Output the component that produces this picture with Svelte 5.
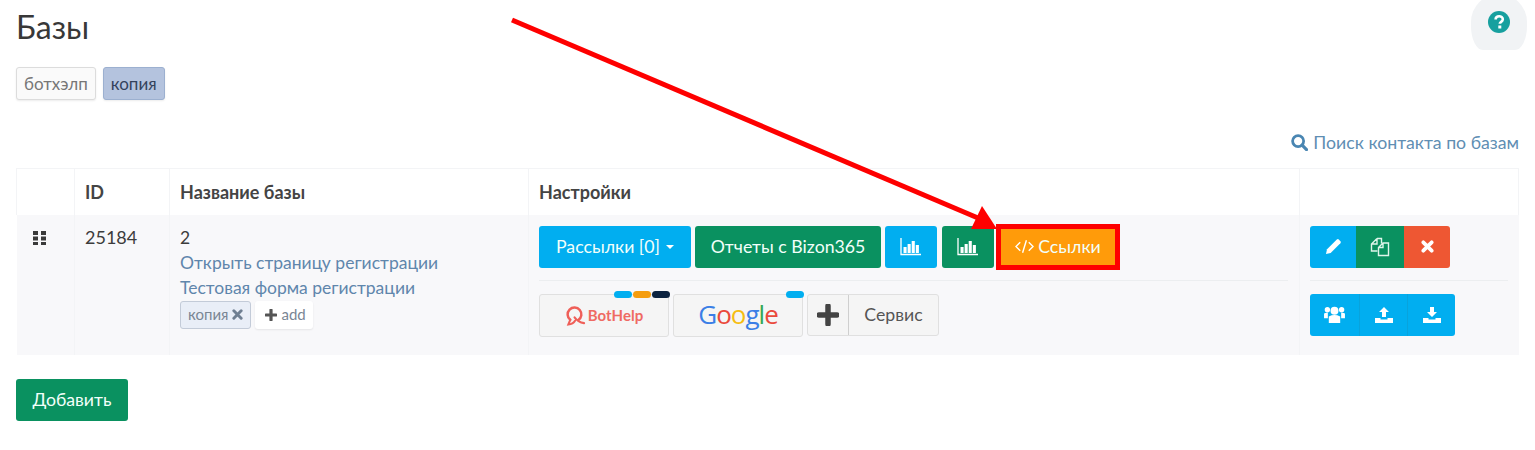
<script>
  const statDots = ['cyan', 'orange', 'navy'];
</script>

<main>
  <h1>Базы</h1>

  <div class="tags">
    <span class="tag">ботхэлп</span>
    <span class="tag active">копия</span>
  </div>

  <div class="search-row">
    <a class="search" href="#search">
      <svg viewBox="0 0 16 16" width="17" height="17" aria-hidden="true">
        <circle cx="6.7" cy="6.7" r="5.2" fill="none" stroke="currentColor" stroke-width="2.6" />
        <path d="M10.5 10.5 14.6 14.6" stroke="currentColor" stroke-width="3" stroke-linecap="round" />
      </svg>
      Поиск контакта по базам
    </a>
  </div>

  <table>
    <thead>
      <tr>
        <th class="c-drag"></th>
        <th class="c-id">ID</th>
        <th class="c-name">Название базы</th>
        <th class="c-settings">Настройки</th>
        <th class="c-actions"></th>
      </tr>
    </thead>
    <tbody>
      <tr>
        <td class="drag">
          <svg viewBox="0 0 14 14" width="14" height="14" aria-hidden="true">
            <path d="M0 0h5v4H0zM8 0h5v4H8zM0 5.5h5v4H0zM8 5.5h5v4H8zM0 11h5v3H0zM8 11h5v3H8z" fill="#3a3a3a" />
          </svg>
        </td>
        <td class="id">25184</td>
        <td class="name">
          <div>2</div>
          <a href="#open">Открыть страницу регистрации</a>
          <a href="#form">Тестовая форма регистрации</a>
          <div class="labels">
            <span class="label">копия
              <svg viewBox="0 0 12 12" width="11" height="11" aria-hidden="true"><path d="M2 2 10 10M10 2 2 10" stroke="currentColor" stroke-width="3.2" stroke-linecap="round" /></svg>
            </span>
            <span class="add">
              <svg viewBox="0 0 12 12" width="12" height="12" aria-hidden="true"><path d="M6 1v10M1 6h10" stroke="currentColor" stroke-width="3.2" stroke-linecap="round" /></svg>
              add
            </span>
          </div>
        </td>
        <td class="settings">
          <div class="line first">
            <button class="btn cyan w-mail">Рассылки [0] <i class="caret"></i></button>
            <button class="btn green w-report">Отчеты с Bizon365</button>
            <button class="btn cyan square">
              <svg viewBox="0 0 22 18" width="22" height="18" aria-hidden="true"><path d="M1 0v16.500h20" fill="none" stroke="#fff" stroke-width="1.300" /><path d="M3.500 9h3.100v6H3.500zM7.600 6h3.100v9H7.600zM11.700 3h3.100v12h-3.100zM15.800 7h3.100v8h-3.100z" fill="#fff" /></svg>
            </button>
            <button class="btn green square">
              <svg viewBox="0 0 22 18" width="22" height="18" aria-hidden="true"><path d="M1 0v16.500h20" fill="none" stroke="#fff" stroke-width="1.300" /><path d="M3.500 9h3.100v6H3.500zM7.600 6h3.100v9H7.600zM11.700 3h3.100v12h-3.100zM15.800 7h3.100v8h-3.100z" fill="#fff" /></svg>
            </button>
            <span class="highlight">
              <button class="btn orange">
                <svg viewBox="0 0 20 14" width="19" height="15" aria-hidden="true"><path d="M5.500 2.500 1 7l4.500 4.500M14.500 2.500 19 7l-4.500 4.500M12 .5 8 13.500" fill="none" stroke="#fff" stroke-width="1.500" /></svg>
                Ссылки
              </button>
            </span>
          </div>
          <div class="line second">
            <div class="service">
              <span class="dots">
                {#each statDots as d}
                  <i class={d}></i>
                {/each}
              </span>
              <svg class="bh-mark" viewBox="0 0 22 22" width="21" height="21" aria-hidden="true">
                <path d="M5.500 15.500A7.200 7.200 0 1 1 14 15.800" fill="none" stroke="#ef5f58" stroke-width="2.600" stroke-linecap="round" />
                <path d="M5.500 15.500 3.500 20.500q5-.5 7-4M10 13q3.500 5 10 6" fill="none" stroke="#ef5f58" stroke-width="2.200" stroke-linecap="round" />
              </svg>
              <span class="bh-text">BotHelp</span>
            </div>
            <div class="service">
              <span class="dots"><i class="cyan"></i></span>
              <span class="google"><b class="g-b">G</b><b class="g-r">o</b><b class="g-y">o</b><b class="g-b">g</b><b class="g-g">l</b><b class="g-r">e</b></span>
            </div>
            <div class="add-service">
              <span class="plus">
                <svg viewBox="0 0 22 22" width="22" height="22" aria-hidden="true"><path d="M11 2v18M2 11h18" stroke="#444" stroke-width="5.500" stroke-linecap="round" /></svg>
              </span>
              <span class="add-text">Сервис</span>
            </div>
          </div>
        </td>
        <td class="actions">
          <div class="line first">
            <div class="group">
              <button class="seg cyan s46">
                <svg viewBox="0 0 18 18" width="17" height="17" aria-hidden="true"><path d="M1 17l1.200-5L12.500 1.700a1.500 1.500 0 0 1 2.100 0l1.700 1.700a1.500 1.500 0 0 1 0 2.100L6 15.800z" fill="#fff" /></svg>
              </button>
              <button class="seg green s48">
                <svg viewBox="0 0 20 20" width="20" height="20" aria-hidden="true"><path d="M7 1.500h4.500v5M7 1.500 1.500 7v7h6M7 1.500V7H1.500" fill="none" stroke="#dff5ea" stroke-width="1.400" /><path d="M13 6h5.500v12.500H8.500V10.500zM13 6v4.500H8.500" fill="none" stroke="#dff5ea" stroke-width="1.400" /></svg>
              </button>
              <button class="seg red s46">
                <svg viewBox="0 0 14 14" width="13" height="13" aria-hidden="true"><path d="M2.500 2.500 11.500 11.500M11.500 2.500 2.500 11.500" stroke="#fff" stroke-width="4" stroke-linecap="round" /></svg>
              </button>
            </div>
          </div>
          <div class="line second">
            <div class="group">
              <button class="seg cyan s49">
                <svg viewBox="0 0 22 20" width="21" height="19" aria-hidden="true"><circle cx="11" cy="6" r="4.200" fill="#fff" /><circle cx="3.500" cy="5" r="2.800" fill="#fff" /><circle cx="18.500" cy="5" r="2.800" fill="#fff" /><path d="M5 12q6-3 12 0v7H5zM0 9q1.500-1.200 4-.8V14H0zM22 9q-1.500-1.200-4-.8V14h4z" fill="#fff" /></svg>
              </button>
              <button class="seg cyan s48 ruled">
                <svg viewBox="0 0 18 18" width="18" height="18" aria-hidden="true"><path d="M9 1l5 5h-3v5H7V6H4zM0 12h5.500v1.500h7V12H18v5H0z" fill="#fff" /></svg>
              </button>
              <button class="seg cyan s48 ruled">
                <svg viewBox="0 0 18 18" width="18" height="18" aria-hidden="true"><path d="M7 1h4v5h3l-5 5-5-5h3zM0 12h5.500v1.500h7V12H18v5H0z" fill="#fff" /></svg>
              </button>
            </div>
          </div>
        </td>
      </tr>
    </tbody>
  </table>

  <button class="btn green create">Добавить</button>

  <!-- overlays: help bubble and the annotation arrow -->
  <div class="help">
    <svg viewBox="0 0 22 22" width="22" height="22" aria-hidden="true">
      <circle cx="11" cy="11" r="11" fill="#17a09f" />
      <path d="M7.600 8.500c0-4.400 7.200-4.300 7.200-.200 0 2.500-3 2.500-3 4.400" fill="none" stroke="#fff" stroke-width="2.600" />
      <rect x="10.300" y="14.500" width="3" height="3" fill="#fff" />
    </svg>
  </div>

  <svg class="arrow" viewBox="0 0 1535 450" width="1535" height="450" aria-hidden="true">
    <path d="M512 20 978 218" stroke="#fe0000" stroke-width="5" />
    <path d="M997 229 971 229 982 206z" fill="#fe0000" />
  </svg>
</main>

<style>
  :global(body) {
    margin: 0;
    background: #fff;
    font-family: Lato, "Noto Sans", sans-serif;
    color: #333;
  }
  main {
    position: relative;
    box-sizing: border-box;
    width: 1535px;
    height: 450px;
    overflow: hidden;
    padding: 9px 16px 0;
  }
  h1 {
    margin: 0;
    font-size: 32px;
    line-height: 36px;
    font-weight: 400;
    color: #383838;
  }
  .tags {
    display: flex;
    gap: 7px;
    margin-top: 22px;
  }
  .tag {
    box-sizing: border-box;
    height: 33px;
    padding: 0 7px;
    display: flex;
    align-items: center;
    font-size: 17px;
    color: #777;
    background: #fafafa;
    border: 1px solid #dcdcdc;
    border-radius: 3px;
    box-shadow: 0 1px 2px rgba(0, 0, 0, 0.08);
  }
  .tag.active {
    color: #33425c;
    background: #b4c3de;
    border-color: #9cb0d0;
  }
  .search-row {
    display: flex;
    justify-content: flex-end;
    margin-top: 31px;
    height: 22px;
  }
  .search {
    display: flex;
    align-items: center;
    gap: 5px;
    font-size: 17.700px;
    color: #5f8eb3;
    text-decoration: none;
  }
  .search svg {
    color: #4a86b2;
  }
  table {
    width: 1503px;
    margin-top: 15px;
    border-collapse: collapse;
    table-layout: fixed;
  }
  th, td {
    box-sizing: border-box;
  }
  th {
    height: 46px;
    padding: 0 11px 0 10px;
    text-align: left;
    font-size: 18px;
    font-weight: 700;
    color: #444;
    border: 1px solid #f3f4f6;
    border-bottom: 0;
  }
  td {
    height: 140px;
    padding: 11px 11px 11px 10px;
    vertical-align: top;
    background: #f8f8fa;
    border-right: 1px solid #f3f4f6;
    font-size: 17.500px;
    color: #3c3c3c;
  }
  td:last-child {
    border-right: 0;
  }
  .c-drag { width: 58px; }
  .c-id { width: 95px; }
  .c-name { width: 359px; }
  .c-settings { width: 771px; }
  td.drag {
    padding: 16px 0 0 16px;
  }
  .drag svg {
    display: block;
  }
  .id {
    font-size: 18px;
    line-height: 23px;
  }
  .name {
    line-height: 25.500px;
    padding-top: 0;
  }
  .name > div:first-child {
    margin-top: 11px;
    line-height: 24px;
  }
  .name a {
    display: block;
    color: #5f86ac;
    text-decoration: none;
  }
  .labels {
    display: flex;
    gap: 4px;
    margin-top: 0;
  }
  .label, .add {
    box-sizing: border-box;
    height: 28px;
    display: flex;
    align-items: center;
    gap: 4px;
    font-size: 15px;
    color: #7a8694;
    border-radius: 3px;
  }
  .label {
    padding: 0 7px;
    background: #e9eef7;
    border: 1px solid #c3cbd8;
  }
  .add {
    padding: 0 7px 0 10px;
    background: #fff;
    box-shadow: 0 1px 2px rgba(0, 0, 0, 0.08);
  }
  .add svg {
    color: #555;
  }
  .label svg {
    color: #6f7f92;
  }
  .settings, .actions {
    padding-top: 0;
    padding-bottom: 0;
  }
  .line {
    display: flex;
    align-items: flex-start;
  }
  .line.first {
    height: 54px;
    box-sizing: content-box;
    padding-top: 11px;
    gap: 4px;
    border-bottom: 1px solid #eceef0;
  }
  .line.second {
    padding-top: 13px;
    gap: 4px;
  }
  .btn {
    box-sizing: border-box;
    height: 42px;
    border: 0;
    border-radius: 3px;
    padding: 0;
    font-family: inherit;
    font-size: 17.700px;
    color: #f2fffa;
    display: flex;
    align-items: center;
    justify-content: center;
    gap: 5px;
  }
  .cyan { background: #01aef0; }
  .green { background: #0a9160; }
  .orange { background: #ff9b0a; }
  .red { background: #ee5733; }
  .w-mail { width: 152px; }
  .w-report { width: 186px; }
  .square { width: 52px; margin-right: 1px; }
  .caret {
    display: inline-block;
    border: 4.500px solid transparent;
    border-top-color: #fff;
    border-bottom: 0;
    margin-left: 1px;
  }
  .highlight {
    display: flex;
    border: 5px solid #fe0000;
    margin: -2px 0 0 -3px;
  }
  .btn.orange {
    width: 114px;
    height: 36px;
    border-radius: 0;
    gap: 4px;
  }
  .service {
    position: relative;
    box-sizing: border-box;
    width: 130px;
    height: 43px;
    display: flex;
    align-items: center;
    justify-content: center;
    gap: 2px;
    background: #f5f5f5;
    border: 1px solid #e0e0e0;
    border-radius: 3px;
  }
  .dots {
    position: absolute;
    top: -4px;
    right: -2px;
    display: flex;
    gap: 1px;
  }
  .dots i {
    width: 18px;
    height: 7px;
    border-radius: 4px;
  }
  .dots .orange {
    background: #f59d0e;
  }
  .dots .navy {
    background: #0c2340;
  }
  .bh-text {
    font-family: Lato, sans-serif;
    font-size: 15px;
    font-weight: 700;
    color: #ef6a63;
  }
  .google {
    font-family: "Open Sans", sans-serif;
    font-size: 26px;
    letter-spacing: -1px;
    line-height: 1;
    margin-top: -2px;
  }
  .google b { font-weight: 500; }
  .g-b { color: #3b7fe6; }
  .g-r { color: #ea4a3c; }
  .g-y { color: #f6bd12; }
  .g-g { color: #35a853; }
  .add-service {
    box-sizing: border-box;
    width: 132px;
    height: 42px;
    display: flex;
    background: #f5f5f5;
    border: 1px solid #e0e0e0;
    border-radius: 3px;
  }
  .plus {
    width: 40px;
    display: flex;
    align-items: center;
    justify-content: center;
    border-right: 1px solid #cfcfcf;
  }
  .add-text {
    flex: 1;
    display: flex;
    align-items: center;
    justify-content: center;
    font-size: 17.700px;
    color: #555;
  }
  .group {
    display: flex;
    border-radius: 3px;
    overflow: hidden;
  }
  .seg {
    height: 42px;
    border: 0;
    padding: 0;
    display: flex;
    align-items: center;
    justify-content: center;
  }
  .s46 { width: 46px; }
  .s48 { width: 48px; }
  .s49 { width: 49px; }
  .ruled { border-left: 1px solid #08a3dd; }
  .create {
    width: 112px;
    margin-top: 24px;
  }
  .help {
    position: absolute;
    top: -6px;
    left: 1471px;
    width: 56px;
    height: 56px;
    border-radius: 28px 28px 12px 12px / 28px 28px 24px 24px;
    background: #f1f3f5;
    display: flex;
    align-items: center;
    justify-content: center;
  }
  .arrow {
    position: absolute;
    top: 0;
    left: 0;
    pointer-events: none;
  }
</style>
